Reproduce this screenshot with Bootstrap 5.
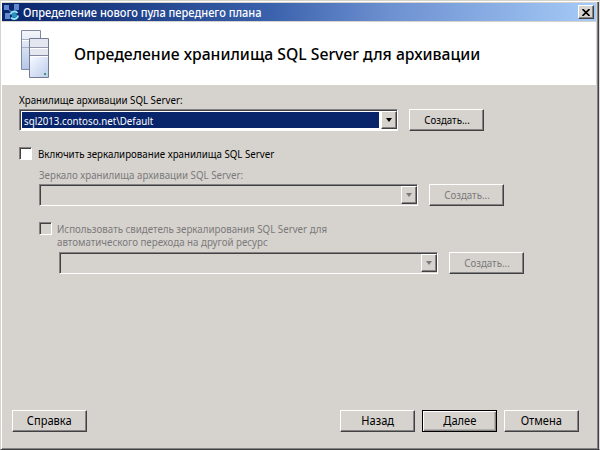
<!DOCTYPE html>
<html lang="ru">
<head>
<meta charset="utf-8">
<title>Определение нового пула переднего плана</title>
<link href="https://cdn.jsdelivr.net/npm/bootstrap@5.3.0/dist/css/bootstrap.min.css" rel="stylesheet">
<style>
:root{--face:#d6d3ce;--shade:#848284;--edge:#424142}
body{width:600px;height:450px;overflow:hidden;font-family:"Noto Sans","Open Sans",sans-serif;font-size:11.5px;line-height:13px;color:#000;background:var(--face)}
.window{height:450px;background:var(--face);border:1px solid;border-color:var(--face) #dedbde var(--edge) var(--face);box-shadow:inset 1px 1px #fff,inset -1px 0 var(--edge),inset -2px -1px var(--shade);padding:2px 3px 1px 1px}
.titlebar{height:18px;background:linear-gradient(90deg,#08246b,#3a61ac 45%,#6d90d0 65%,#a5cbf7);color:#fff;font-size:12px;font-weight:500;padding:0 2px 0 1px}
.titlebar .logo{width:17px;height:18px;flex:none}
.titlebar .narrow{transform:scaleX(.919);margin-left:3px}
.close-box{width:16px;height:14px;color:#000;background:var(--face);border:1px solid;border-color:#fff var(--edge) var(--edge) #fff;box-shadow:inset -1px -1px var(--shade)}
.close-box svg{width:8px;height:7px}
.banner{height:64px;border-top:1px solid var(--face);padding-left:19px}
.banner svg{width:28px;height:48px;margin-top:8px}
.banner h1{font-size:16.5px;line-height:22px;font-weight:500;margin:21px 0 0 25px;transform:scaleX(.953)}
.fields{height:325px;padding:8px 0 0 17px}
.narrow,.banner h1{display:inline-block;white-space:nowrap;transform-origin:0 50%}
.narrow{transform:scaleX(.846)}
.combo{width:379px;height:22px;border:1px solid;border-color:var(--shade) #fff #fff var(--shade);box-shadow:inset 1px 1px var(--edge);padding:1px 0 0 1px}
.live{background:#fff}
.picked{background:#08246b;color:#fff;height:16px;line-height:17px;margin:1px 2px 0 1px;padding-left:2px}
.drop{width:16px;height:18px;background:var(--face);border:1px solid;border-color:#fff var(--edge) var(--edge) #fff;box-shadow:inset -1px -1px var(--shade)}
.drop::after{content:"";border:3px solid transparent;border-top:4px solid;border-bottom:0;margin-left:-1px}
.push{width:75px;height:22px;padding:0;border-radius:0;font-size:11.5px;line-height:20px;color:#000;background:var(--face);border:1px solid;border-color:#fff var(--edge) var(--edge) #fff;box-shadow:inset -1px -1px var(--shade)}
.push .narrow{transform-origin:50% 50%}
.push.main{border-color:#000;box-shadow:inset 1px 1px #fff,inset -1px -1px var(--shade),inset -2px -2px #b5b2ad}
.line{gap:11px}
.tick{width:13px;height:13px;flex:none;border:1px solid;border-color:var(--shade) #fff #fff var(--shade);box-shadow:inset 1px 1px var(--edge)}
.off,.off .push{color:#7b797b}
.mirror{padding:8px 0 0 20px}
.witness{padding:4px 0 0 20px}
.wizard{padding:0 17px 0 10px}
.wizard .push{font-size:12px}
.wizard .narrow{transform:scaleX(.925)}
.next-set{gap:7px}
</style>
<script src="https://cdn.jsdelivr.net/npm/bootstrap@5.3.0/dist/js/bootstrap.bundle.min.js"></script>
</head>
<body>
<main class="window">
<header class="titlebar d-flex align-items-center">
<svg class="logo" viewBox="0 0 17 18"><path fill="#6388cf" d="M1 2h5v5H1zM11 1h5v6h-5zM2 10h5v6H2z"/><path d="M6 7l4 3 3-3" stroke="#3f62ae" stroke-width="2" fill="none"/><path d="M7.500 11.500a4 4 0 0 1 7-1.500M15 12.500a4 4 0 0 1-7 2" stroke="#8ee4f2" stroke-width="2" fill="none"/><circle cx="11.300" cy="12.200" r="2.500" fill="#2a93bd"/></svg>
<span class="narrow me-auto">Определение нового пула переднего плана</span>
<span class="close-box d-flex align-items-center justify-content-center"><svg viewBox="0 0 8 7"><path d="M.5 0l7 7M7.5 0l-7 7" stroke="currentColor" stroke-width="1.6"/></svg></span>
</header>
<section class="banner bg-white d-flex">
<svg viewBox="0 0 28 48"><defs><linearGradient id="steel" x2="0" y2="1"><stop stop-color="#f4f6fb"/><stop offset="1" stop-color="#b4c6e8"/></linearGradient><linearGradient id="front" x2="1" y2="1"><stop stop-color="#f6f9ff"/><stop offset="1" stop-color="#bccdec"/></linearGradient></defs>
<path fill="url(#steel)" stroke="#8087a0" d="M.5.500h19v39H.5z"/><path d="M1 9.500h7M1 17.500h7" stroke="#a9aec0"/><path d="M1 10.500h7" stroke="#fff"/>
<path fill="#e4e7f0" stroke="#737b93" d="M8.500 8.500h19v39h-19z"/><path fill="url(#front)" d="M9 27h18v20H9z"/><path d="M9 17.500h18" stroke="#8f94a8"/><path d="M9 25.500h18" stroke="#8087a0"/><path d="M9 18.500h18M9 26.500h18" stroke="#fff"/><path fill="#3d9a6a" d="M23 43h2v2h-2z"/></svg>
<h1>Определение хранилища SQL Server для архивации</h1>
</section>
<section class="fields">
<div><span class="narrow">Хранилище архивации SQL Server:</span></div>
<div class="line d-flex" style="margin-top:3px">
<div class="combo live d-flex"><div class="picked flex-grow-1"><span class="narrow">sql2013.contoso.net\Default</span></div><span class="drop d-flex align-items-center justify-content-center"></span></div>
<button class="btn push"><span class="narrow">Создать...</span></button>
</div>
<div class="d-flex mt-3"><span class="tick bg-white"></span><span class="narrow" style="margin-left:6px">Включить зеркалирование хранилища SQL Server</span></div>
<div class="mirror off">
<div><span class="narrow">Зеркало хранилища архивации SQL Server:</span></div>
<div class="line d-flex" style="margin-top:3px">
<div class="combo d-flex justify-content-end"><span class="drop d-flex align-items-center justify-content-center"></span></div>
<button class="btn push"><span class="narrow">Создать...</span></button>
</div>
<div class="d-flex mt-3"><span class="tick"></span><span class="narrow" style="margin-left:5px">Использовать свидетель зеркалирования SQL Server для<br>автоматического перехода на другой ресурс</span></div>
<div class="witness line d-flex">
<div class="combo d-flex justify-content-end"><span class="drop d-flex align-items-center justify-content-center"></span></div>
<button class="btn push"><span class="narrow">Создать...</span></button>
</div>
</div>
</section>
<footer class="wizard d-flex justify-content-between">
<button class="btn push"><span class="narrow">Справка</span></button>
<div class="next-set d-flex">
<button class="btn push" style="line-height:18px"><span class="narrow">Назад</span></button>
<button class="btn push main"><span class="narrow">Далее</span></button>
<button class="btn push"><span class="narrow">Отмена</span></button>
</div>
</footer>
</main>
</body>
</html>
